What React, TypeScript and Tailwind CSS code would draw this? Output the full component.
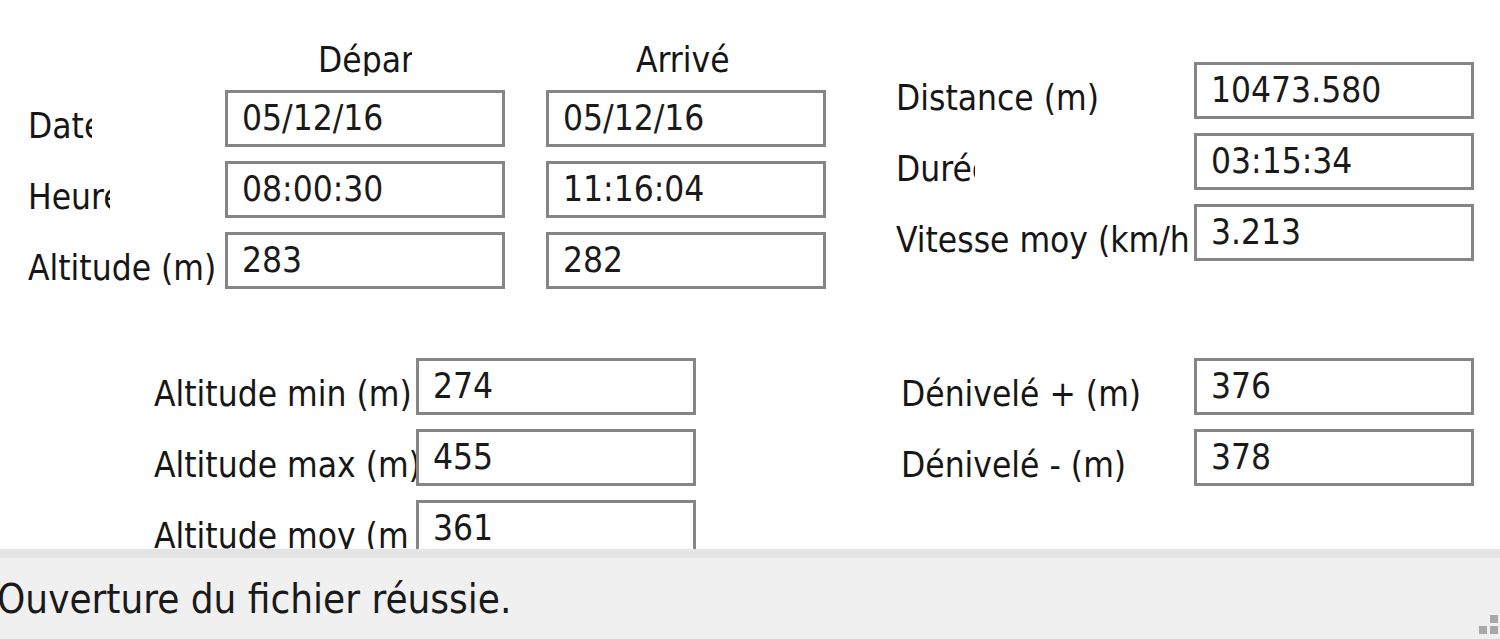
const font = "font-['DejaVu_Sans_Condensed','DejaVu_Sans',sans-serif]"

function Box({ value }: { value: string }) {
  return (
    <div className="relative flex h-[57px] w-[280px] shrink-0 items-center border-[3px] border-[#858585] bg-white pl-[14px] text-[#1a1a1a]">
      {value}
    </div>
  )
}

function Row({
  label,
  labelWidth,
  clipWidth,
  value,
}: {
  label: string
  labelWidth: number
  clipWidth?: number
  value: string
}) {
  return (
    <div className="flex h-[57px] items-start">
      <div className="shrink-0 pt-[16px]" style={{ width: labelWidth }}>
        <div
          className={`whitespace-nowrap leading-[40px] ${clipWidth ? 'overflow-hidden' : ''}`}
          style={clipWidth ? { width: clipWidth } : undefined}
        >
          {label}
        </div>
      </div>
      <Box value={value} />
    </div>
  )
}

export default function App() {
  return (
    <div className={`h-[639px] w-[1500px] overflow-hidden bg-white text-[35px] text-[#161616] ${font}`}>
      <div className="h-[549px] overflow-hidden">
        {/* upper block */}
        <div className="flex items-start">
          <div className="ml-[28px] flex flex-col">
            <div className="flex h-[90px]">
              <div className="w-[197px]" />
              <div className="w-[280px] pl-[93px] pt-[40px]">
                <div className="h-[36px] w-[94px] overflow-hidden whitespace-nowrap leading-[40px]">Départ</div>
              </div>
              <div className="ml-[41px] w-[280px] pl-[90px] pt-[40px]">
                <div className="h-[36px] w-[93px] overflow-hidden whitespace-nowrap leading-[40px]">Arrivée</div>
              </div>
            </div>
            <div className="flex flex-col gap-[14px]">
              {[
                ['Date', 64, '05/12/16', '05/12/16'],
                ['Heure', 82, '08:00:30', '11:16:04'],
                ['Altitude (m)', 0, '283', '282'],
              ].map(([label, clip, dep, arr]) => (
                <div key={label as string} className="flex h-[57px] items-start gap-[41px]">
                  <Row
                    label={label as string}
                    labelWidth={197}
                    clipWidth={(clip as number) || undefined}
                    value={dep as string}
                  />
                  <Box value={arr as string} />
                </div>
              ))}
            </div>
          </div>

          <div className="ml-[70px] flex flex-col gap-[14px] pt-[62px]">
            <Row label="Distance (m)" labelWidth={298} value="10473.580" />
            <Row label="Durée" labelWidth={298} clipWidth={79} value="03:15:34" />
            <Row label="Vitesse moy (km/h)" labelWidth={298} clipWidth={296} value="3.213" />
          </div>
        </div>

        {/* lower block */}
        <div className="mt-[69px] flex items-start">
          <div className="ml-[154px] flex flex-col gap-[14px]">
            <Row label="Altitude min (m)" labelWidth={262} value="274" />
            <Row label="Altitude max (m)" labelWidth={262} value="455" />
            <Row label="Altitude moy (m)" labelWidth={262} clipWidth={256} value="361" />
          </div>
          <div className="ml-[205px] flex flex-col gap-[14px]">
            <Row label="Dénivelé + (m)" labelWidth={293} value="376" />
            <Row label="Dénivelé - (m)" labelWidth={293} value="378" />
          </div>
        </div>
      </div>

      {/* status bar */}
      <div className="h-[90px] border-t-[9px] border-[#e4e4e4] bg-[#f0f0f0]">
        <div className="flex h-full items-start justify-between">
          <div className="-ml-[3px] whitespace-nowrap pt-[18px] text-[40px] leading-[46px] text-[#1a1a1a]">
            Ouverture du fichier réussie.
          </div>
          <div className="mr-[2px] mt-[57px] grid grid-cols-2 gap-[3px]">
            <div />
            <div className="h-[8px] w-[8px] bg-[#a8a8a8]" />
            <div className="h-[8px] w-[8px] bg-[#a8a8a8]" />
            <div className="h-[8px] w-[8px] bg-[#a8a8a8]" />
          </div>
        </div>
      </div>
    </div>
  )
}
